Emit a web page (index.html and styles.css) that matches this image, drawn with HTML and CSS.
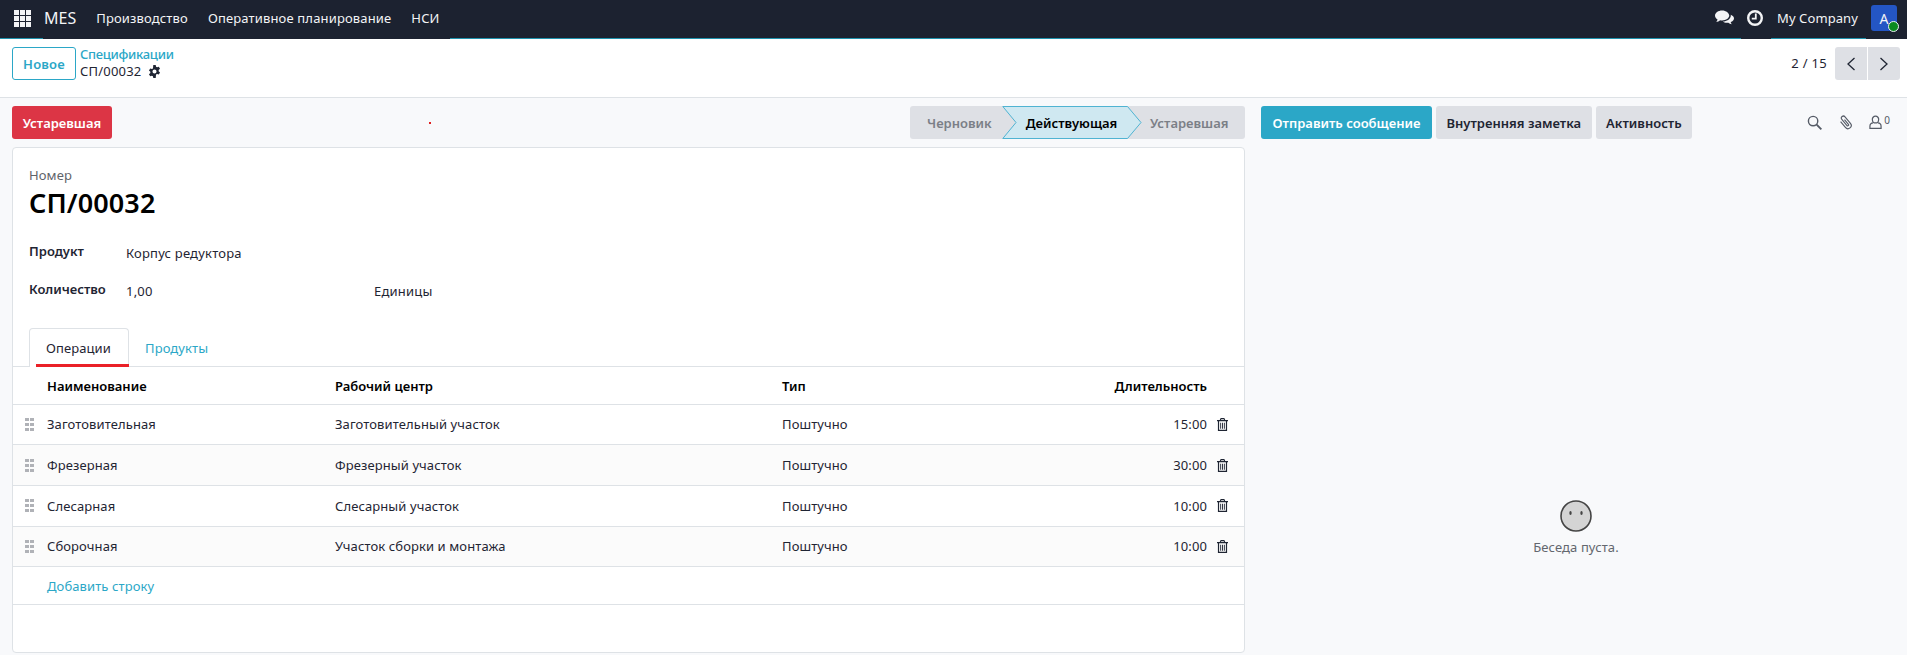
FILE: index.html
```html
<!DOCTYPE html>
<html lang="ru">
<head>
    <meta charset="UTF-8">
    <meta name="viewport" content="width=device-width, initial-scale=1.0">
    <title>СП/00032</title>
    <link rel="stylesheet" href="styles.css">
</head>
<body>
    <!-- shared icons -->
    <svg class="icon-defs" width="0" height="0">
        <symbol id="trash" viewBox="0 0 12 14">
            <path fill="#1f2533" fill-rule="evenodd" d="M4 0h4l1 2h3v1.500h-1V14H1V3.500H0V2h3zM4.700 1.200 4.300 2h3.400l-.4-.8zM2.300 3.500v9.200h7.400V3.500zM3.500 5h1v6.500h-1zM5.500 5h1v6.500h-1zM7.500 5h1v6.500h-1z"/>
        </symbol>
        <symbol id="handle" viewBox="0 0 9 13">
            <path fill="#b0b2b7" d="M0 0h4v3H0zM5 0h4v3H5zM0 5h4v3H0zM5 5h4v3H5zM0 10h4v3H0zM5 10h4v3H5z"/>
        </symbol>
    </svg>

    <header class="navbar">
        <div class="nav-left">
            <span class="apps-btn">
                <svg viewBox="0 0 17 17" width="17" height="17">
                    <path fill="#f3f4f6" d="M0 0h5v5H0zM6 0h5v5H6zM12 0h5v5h-5zM0 6h5v5H0zM6 6h5v5H6zM12 6h5v5h-5zM0 12h5v5H0zM6 12h5v5H6zM12 12h5v5h-5z"/>
                </svg>
            </span>
            <span class="brand">MES</span>
            <nav class="menu">
                <a>Производство</a>
                <a>Оперативное планирование</a>
                <a>НСИ</a>
            </nav>
        </div>
        <div class="nav-right">
            <svg viewBox="0 0 20 16" width="19" height="16">
                <path fill="#f3f4f6" d="M7.500 0C3.400 0 0 2.400 0 5.400c0 1.700 1.100 3.200 2.700 4.200-.2 1-.8 1.800-1.400 2.400 1.500-.1 2.900-.7 4-1.700.7.100 1.400.2 2.200.2 4.100 0 7.500-2.400 7.500-5.100S11.600 0 7.500 0z"/>
                <path fill="#f3f4f6" d="M16.500 4.600c.2.500.2 1 .1 1.500-.6 3.100-4.100 5.500-8.400 5.600 1 .9 2.500 1.400 4.100 1.400.6 0 1.200-.1 1.800-.2.900.9 2.200 1.500 3.600 1.600-.6-.6-1-1.300-1.200-2.200C18.700 11.500 20 10.100 20 8.500c0-1.600-1.400-3-3.500-3.900z"/>
            </svg>
            <svg class="clock-icon" viewBox="0 0 16 16" width="16" height="16">
                <circle cx="8" cy="8" r="6.800" fill="none" stroke="#f3f4f6" stroke-width="2.400"/>
                <path fill="none" stroke="#f3f4f6" stroke-width="1.800" d="M8.800 3.500v5.200H4.800"/>
            </svg>
            <span class="company">My Company</span>
            <span class="avatar">A<span class="presence"></span></span>
        </div>
    </header>

    <section class="control-panel">
        <div class="cp-left">
            <button class="btn-new">Новое</button>
            <div class="breadcrumb">
                <a>Спецификации</a>
                <div class="crumb-current">
                    <span>СП/00032</span>
                    <svg viewBox="0 0 16 16" width="13" height="13">
                        <path fill="#1f2533" fill-rule="evenodd" d="M6.500 0h3l.4 2.200c.5.200.9.400 1.300.7l2.100-.8 1.500 2.600-1.700 1.400c.1.600.1 1.100 0 1.700l1.700 1.400-1.500 2.600-2.100-.8c-.4.300-.8.500-1.300.7L9.500 16h-3l-.4-2.200c-.5-.2-.9-.4-1.300-.7l-2.100.8-1.500-2.600 1.700-1.400c-.1-.6-.1-1.100 0-1.700L1.200 6.800l1.500-2.600 2.100.8c.4-.3.800-.5 1.300-.7zM8 5.500a2.500 2.500 0 1 0 0 5 2.500 2.500 0 0 0 0-5z"/>
                    </svg>
                </div>
            </div>
        </div>
        <div class="pager">
            <span class="pager-value">2 / 15</span>
            <div class="pager-btns">
                <button class="pager-btn">
                    <svg viewBox="0 0 10 16" width="10" height="16"><path fill="none" stroke="#1f2533" stroke-width="1.300" d="M8.500 2 2 8l6.500 6"/></svg>
                </button>
                <button class="pager-btn">
                    <svg viewBox="0 0 10 16" width="10" height="16"><path fill="none" stroke="#1f2533" stroke-width="1.300" d="M1.500 2 8 8l-6.500 6"/></svg>
                </button>
            </div>
        </div>
    </section>

    <main class="content">
        <div class="form-side">
            <div class="status-row">
                <button class="btn-danger">Устаревшая</button>
                <span class="red-dot"></span>
                <div class="statusbar">
                    <span class="step step-first">Черновик</span>
                    <span class="step step-active">
                        <svg class="pip" viewBox="0 0 140 33" width="140" height="33">
                            <path fill="#cfe8f1" stroke="#4fb3d2" d="M.8.500H125.500L139 16.500 125.500 32.500H.8L14 16.500z"/>
                        </svg>
                        <span class="step-label">Действующая</span>
                    </span>
                    <span class="step step-last">Устаревшая</span>
                </div>
            </div>

            <div class="sheet">
                <div class="title-block">
                    <div class="title-label">Номер</div>
                    <h1>СП/00032</h1>
                </div>
                <div class="field-row field-product">
                    <label>Продукт</label>
                    <span>Корпус редуктора</span>
                </div>
                <div class="field-row field-qty">
                    <label>Количество</label>
                    <span class="qty-value">1,00</span>
                    <span>Единицы</span>
                </div>

                <div class="tabs">
                    <a class="tab tab-active">Операции</a>
                    <a class="tab">Продукты</a>
                </div>

                <table class="lines">
                    <thead>
                        <tr>
                            <th class="col-handle"></th>
                            <th class="col-name">Наименование</th>
                            <th class="col-center">Рабочий центр</th>
                            <th class="col-type">Тип</th>
                            <th class="col-time">Длительность</th>
                            <th class="col-trash"></th>
                        </tr>
                    </thead>
                    <tbody>
                        <tr>
                            <td class="col-handle"><svg class="handle"><use href="#handle"/></svg></td>
                            <td>Заготовительная</td>
                            <td>Заготовительный участок</td>
                            <td>Поштучно</td>
                            <td class="col-time">15:00</td>
                            <td class="col-trash"><svg class="trash"><use href="#trash"/></svg></td>
                        </tr>
                        <tr>
                            <td class="col-handle"><svg class="handle"><use href="#handle"/></svg></td>
                            <td>Фрезерная</td>
                            <td>Фрезерный участок</td>
                            <td>Поштучно</td>
                            <td class="col-time">30:00</td>
                            <td class="col-trash"><svg class="trash"><use href="#trash"/></svg></td>
                        </tr>
                        <tr>
                            <td class="col-handle"><svg class="handle"><use href="#handle"/></svg></td>
                            <td>Слесарная</td>
                            <td>Слесарный участок</td>
                            <td>Поштучно</td>
                            <td class="col-time">10:00</td>
                            <td class="col-trash"><svg class="trash"><use href="#trash"/></svg></td>
                        </tr>
                        <tr>
                            <td class="col-handle"><svg class="handle"><use href="#handle"/></svg></td>
                            <td>Сборочная</td>
                            <td>Участок сборки и монтажа</td>
                            <td>Поштучно</td>
                            <td class="col-time">10:00</td>
                            <td class="col-trash"><svg class="trash"><use href="#trash"/></svg></td>
                        </tr>
                        <tr class="add-row">
                            <td class="col-handle"></td>
                            <td colspan="5"><a>Добавить строку</a></td>
                        </tr>
                    </tbody>
                </table>
            </div>
        </div>

        <aside class="chatter">
            <div class="chatter-top">
                <div class="chatter-btns">
                    <button class="btn-send">Отправить сообщение</button>
                    <button class="btn-grey">Внутренняя заметка</button>
                    <button class="btn-grey">Активность</button>
                </div>
                <div class="chatter-tools">
                    <svg viewBox="0 0 16 16" width="15" height="15"><circle cx="6.500" cy="6.500" r="5" fill="none" stroke="#555b66" stroke-width="1.500"/><path stroke="#555b66" stroke-width="2" d="m10.300 10.300 5 5"/></svg>
                    <svg viewBox="0 0 16 16" width="15" height="15"><path fill="none" stroke="#555b66" stroke-width="1.200" transform="rotate(-40 8 8)" d="M4.500 4v8a3.500 3.500 0 0 0 7 0V3a2.200 2.200 0 0 0-4.400 0v8.500a1 1 0 0 0 2 0V5"/></svg>
                    <span class="followers">
                        <svg viewBox="0 0 14 16" width="13" height="15"><path fill="none" stroke="#555b66" stroke-width="1.300" d="M7 1.200a3.400 3.400 0 0 1 3.400 3.800c0 1.400-.7 3-2.100 3.500H5.700C4.300 8 3.600 6.400 3.600 5A3.400 3.400 0 0 1 7 1.200zM4.500 8.500C2.300 8.700 1 10 1 12v2.400h12V12c0-2-1.300-3.300-3.500-3.500"/></svg>
                        <sup>0</sup>
                    </span>
                </div>
            </div>
            <div class="chatter-empty">
                <svg viewBox="0 0 32 32" width="32" height="32">
                    <circle cx="16" cy="16" r="15" fill="#d4d4d4" stroke="#444" stroke-width="1.600"/>
                    <ellipse cx="10.500" cy="13" rx="1.200" ry="2" fill="#444"/>
                    <ellipse cx="21.500" cy="13" rx="1.200" ry="2" fill="#444"/>
                </svg>
                <p>Беседа пуста.</p>
            </div>
        </aside>
    </main>
</body>
</html>
```

FILE: styles.css
```css
* {
    box-sizing: border-box;
}
html, body {
    height: 100%;
}
body {
    margin: 0;
    display: flex;
    flex-direction: column;
    overflow: hidden;
    font-family: "Noto Sans", "Open Sans", sans-serif;
    font-size: 13px;
    letter-spacing: .1px;
    color: #1f2533;
    background: #f8f9fb;
}
button {
    font-family: inherit;
    font-size: 13px;
    font-weight: 600;
    height: 33px;
    border: none;
    border-radius: 3px;
    cursor: pointer;
}
.icon-defs {
    position: absolute;
}

/* top bar */
.navbar {
    flex: none;
    height: 39px;
    display: flex;
    justify-content: space-between;
    align-items: center;
    background-color: #1c2230;
    background-image: linear-gradient(90deg, #1f93ad 43px, transparent 43px, transparent 450px, #1f93ad 450px, #1f93ad 1741px, transparent 1741px, transparent 1771px, #1f93ad 1771px, #1f93ad 1866px, transparent 1866px);
    background-size: 100% 1px;
    background-position: left bottom;
    background-repeat: no-repeat;
    color: #f3f4f6;
}
.nav-left, .nav-right {
    display: flex;
    align-items: center;
}
.apps-btn {
    display: flex;
    padding-left: 14px;
    margin-top: -3px;
}
.brand {
    margin-left: 13px;
    font-size: 16px;
    letter-spacing: 0;
    margin-top: -3px;
}
.menu {
    display: flex;
    gap: 20px;
    margin-left: 20px;
    margin-top: -4px;
    letter-spacing: .15px;
}
.nav-right {
    margin-top: -3px;
}
.clock-icon {
    margin-left: 13px;
}
.company {
    margin-left: 14px;
}
.avatar {
    position: relative;
    display: flex;
    justify-content: center;
    align-items: center;
    width: 26px;
    height: 26px;
    margin: 0 10px 0 13px;
    border-radius: 3px;
    background: #2456c4;
    font-size: 14px;
}
.presence {
    position: absolute;
    right: -2px;
    bottom: -1px;
    width: 11px;
    height: 11px;
    border: 1px solid #e8f0ee;
    border-radius: 50%;
    background: #0a8a1e;
}

/* control panel */
.control-panel {
    flex: none;
    height: 59px;
    display: flex;
    justify-content: space-between;
    padding: 8px 7px 0 12px;
    background: #fff;
    border-bottom: 1px solid #dee2e6;
}
.cp-left {
    display: flex;
    gap: 4px;
}
.btn-new {
    width: 64px;
    background: #fff;
    border: 1px solid #2ba7c7;
    color: #2ba7c7;
    letter-spacing: .2px;
}
.breadcrumb {
    line-height: 17px;
    margin-top: -1px;
}
.breadcrumb a {
    display: block;
    color: #2ba7c7;
    font-weight: 500;
    letter-spacing: -.3px;
}
.crumb-current {
    display: flex;
    align-items: center;
    gap: 7px;
    letter-spacing: .2px;
}
.pager {
    display: flex;
    align-items: flex-start;
    gap: 8px;
}
.pager-value {
    line-height: 33px;
    letter-spacing: .3px;
}
.pager-btns {
    display: flex;
    gap: 1px;
}
.pager-btn {
    display: flex;
    justify-content: center;
    align-items: center;
    width: 32px;
    padding: 0;
    background: #dee0e5;
}
.pager-btn:first-child {
    border-radius: 3px 0 0 3px;
}
.pager-btn:last-child {
    border-radius: 0 3px 3px 0;
}

/* main area */
.content {
    flex: 1;
    min-height: 0;
    display: flex;
}
.form-side {
    width: 1233px;
    margin-left: 12px;
    padding-top: 8px;
}
.status-row {
    position: relative;
    display: flex;
    justify-content: space-between;
    height: 33px;
}
.btn-danger {
    width: 100px;
    background: #dc3545;
    color: #fff;
}
.red-dot {
    position: absolute;
    left: 417px;
    top: 16px;
    width: 2px;
    height: 2px;
    background: #e02020;
}
.statusbar {
    display: flex;
    align-items: center;
    width: 335px;
    border-radius: 3px;
    background: #dee0e5;
    font-weight: 600;
    letter-spacing: 0;
    color: #7b7f87;
}
.step-first {
    width: 92px;
    padding-left: 17px;
}
.step-active {
    position: relative;
    width: 139px;
    text-align: center;
    color: #000;
}
.step-label {
    position: relative;
}
.pip {
    position: absolute;
    left: 0;
    top: -8px;
}
.step-last {
    padding-left: 9px;
}

.sheet {
    height: 506px;
    margin-top: 8px;
    background: #fff;
    border: 1px solid #dee2e6;
    border-radius: 4px;
}
.title-block {
    padding: 18px 16px 0;
}
.title-label {
    line-height: 18px;
    color: #5f636a;
}
h1 {
    margin: 0;
    font-size: 27px;
    font-weight: 600;
    line-height: 37px;
    color: #000;
}
.field-row {
    display: flex;
    padding-left: 16px;
    letter-spacing: .2px;
}
.field-row label {
    width: 97px;
    font-weight: 600;
    letter-spacing: 0;
    line-height: 18px;
    margin-top: -2px;
}
.field-product {
    margin-top: 23px;
}
.field-qty {
    margin-top: 20px;
}
.qty-value {
    width: 248px;
}
.tabs {
    display: flex;
    height: 39px;
    margin-top: 28px;
    padding-left: 16px;
    border-bottom: 1px solid #dee2e6;
}
.tab {
    position: relative;
    height: 39px;
    padding: 11px 16px 0;
    color: #2ba7c7;
}
.tab-active {
    width: 100px;
    background: #fff;
    border: 1px solid #dee2e6;
    border-bottom: none;
    border-radius: 4px 4px 0 0;
    color: #1f2533;
    padding-top: 10px;
}
.tab-active::after {
    content: "";
    position: absolute;
    left: 6px;
    right: -1px;
    bottom: 0;
    height: 3px;
    background: #ea2027;
}

/* lines table */
.lines {
    width: 100%;
    border-collapse: collapse;
    table-layout: fixed;
}
.lines th, .lines td {
    padding: 0;
    text-align: left;
    border-bottom: 1px solid #dee2e6;
}
.lines th {
    height: 37px;
    padding-top: 1px;
    font-weight: 600;
    letter-spacing: 0;
    color: #000;
}
.lines td {
    height: 40.700px;
}
.lines tbody tr:nth-child(even):not(.add-row) td {
    background: #fbfbfb;
}
.lines .col-handle {
    width: 34px;
    line-height: 0;
}
.lines .col-name {
    width: 288px;
}
.lines .col-center {
    width: 447px;
}
.lines .col-type {
    width: 150px;
}
.lines .col-time {
    text-align: right;
}
.lines .col-trash {
    width: 37px;
    padding-left: 10px;
    line-height: 0;
}
.handle {
    width: 9px;
    height: 13px;
    margin-left: 12px;
}
.trash {
    width: 11px;
    height: 13px;
}
.lines .add-row td {
    height: 38px;
}
.add-row a {
    color: #2ba7c7;
}

/* chatter */
.chatter {
    flex: 1;
    min-width: 0;
    display: flex;
    flex-direction: column;
    padding: 8px 16px 0;
}
.chatter-top {
    display: flex;
    justify-content: space-between;
    align-items: center;
}
.chatter-btns {
    display: flex;
    gap: 4px;
}
.btn-send {
    width: 171px;
    padding: 0;
    background: #2ba7c7;
    color: #fff;
}
.btn-grey {
    padding: 0 10.500px;
    background: #dee0e5;
    color: #1f2533;
}
.chatter-tools {
    display: flex;
    align-items: center;
    gap: 16px;
    padding-right: 1px;
}
.followers {
    display: flex;
    color: #555b66;
}
.followers sup {
    font-size: 10px;
    line-height: 10px;
    margin-left: 2px;
}
.chatter-empty {
    margin-top: 361px;
    text-align: center;
    color: #63676e;
}
.chatter-empty svg {
    display: block;
    margin: 0 auto;
}
.chatter-empty p {
    margin: 6px 0 0;
}
```
